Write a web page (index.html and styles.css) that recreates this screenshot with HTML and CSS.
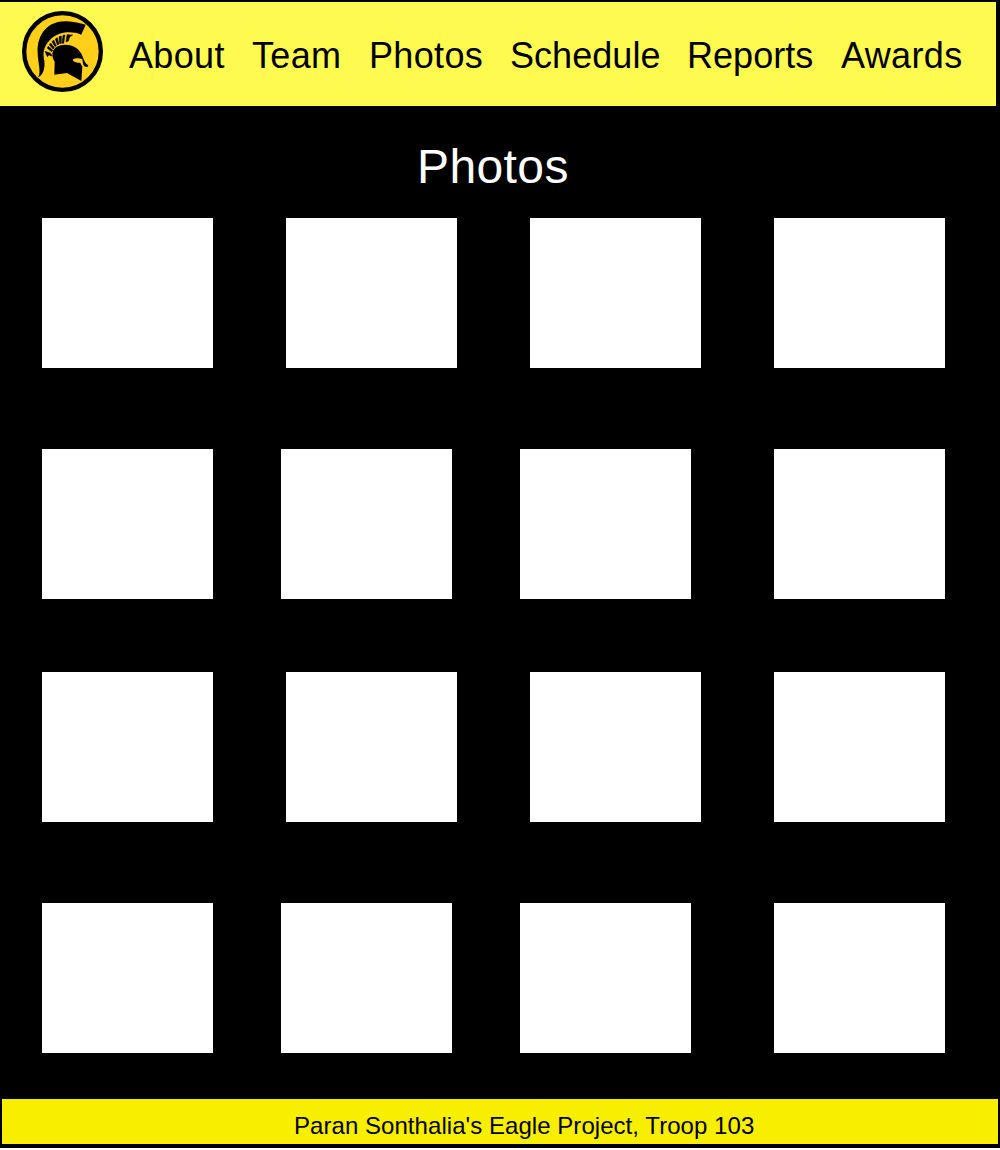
FILE: index.html
```html
<!DOCTYPE html>
<html lang="en">
<head>
<meta charset="utf-8">
<title>Photos</title>
<link rel="stylesheet" href="styles.css">
</head>
<body>
<div class="page">
  <header class="header">
    <svg class="logo" viewBox="29 33 243 243" aria-hidden="true">
      <circle cx="150.500" cy="154.500" r="115" fill="#ffcf1a" stroke="#000" stroke-width="13"/>
      <path d="M77 231C88 220 76 183 76 159C73 97 113 61 163 64C185 65 202 70 220 74L207 104C176 92 136 94 112 121C93 142 91 159 96 183C99 207 90 229 77 231Z"/>
      <path stroke="#000" stroke-width="1.500" d="M98 154L115 160L119 168L109 165L105 170ZM104 144L108 139L121 150L118 155ZM111 134L115 129L126 143L122 147ZM119 125L124 120L132 137L128 140ZM129 117L135 113L140 132L135 135ZM140 110L147 108L147 130L142 131ZM152 106L158 105L154 130L149 130ZM164 104L181 105L172 111L168 123L161 126Z"/>
      <path d="M126 224L127 185C117 170 117 151 132 141C157 127 192 135 205 158C215 173 214 188 228 196L225 202L216 199C212 195 211 186 210 178C202 174 189 174 181 179C184 187 194 187 204 189L210 200L207 243L164 219Z"/>
    </svg>
    <nav class="nav">
      <a>About</a>
      <a>Team</a>
      <a>Photos</a>
      <a class="tight">Schedule</a>
      <a class="tight">Reports</a>
      <a>Awards</a>
    </nav>
  </header>
  <main class="main">
    <h1 class="title">Photos</h1>
    <div class="gallery">
      <div class="row"><div class="photo"></div><div class="photo"></div><div class="photo"></div><div class="photo"></div></div>
      <div class="row narrow"><div class="photo"></div><div class="photo"></div><div class="photo"></div><div class="photo"></div></div>
      <div class="row"><div class="photo"></div><div class="photo"></div><div class="photo"></div><div class="photo"></div></div>
      <div class="row narrow"><div class="photo"></div><div class="photo"></div><div class="photo"></div><div class="photo"></div></div>
    </div>
  </main>
  <footer class="footer">Paran Sonthalia's Eagle Project, Troop 103</footer>
</div>
</body>
</html>
```
FILE: styles.css
```css
* { box-sizing: border-box; }
body {
  margin: 0;
  background: #fff;
  font-family: "Liberation Sans", Arial, sans-serif;
}
.page {
  display: flex;
  flex-direction: column;
  width: 1000px;
  height: 1148px;
  padding: 2px 0 4px;
  background: #000;
}
.header {
  display: flex;
  width: 996px;
  height: 104px;
  padding: 9px 0 0 22px;
  background: #fffa50;
}
.logo {
  flex: none;
  width: 81px;
  height: 81px;
}
.nav {
  display: grid;
  grid-template-columns: 123px 117px 141px 177px 154px 130px;
  margin: 25px 0 0 26px;
  color: #000;
  font-size: 36px;
  line-height: 40px;
  letter-spacing: 0.35px;
  white-space: nowrap;
}
.tight { letter-spacing: 0.05px; }
.title {
  height: 60px;
  margin: 31px 0 0 417px;
  color: #fff;
  font-size: 48px;
  font-weight: 400;
  line-height: 60px;
  letter-spacing: 0.4px;
}
.gallery {
  display: grid;
  grid-template-rows: 231px 223px 231px 150px;
  margin: 21px 0 0 42px;
}
.row {
  display: grid;
  grid-template-columns: 244px 244px 244px 171px;
}
.narrow { grid-template-columns: 239px 239px 254px 171px; }
.photo {
  width: 171px;
  height: 150px;
  background: #fff;
}
.footer {
  width: 996px;
  height: 45px;
  margin: auto 0 0 2px;
  padding-left: 292px;
  background: #f7ee00;
  color: #000;
  font-size: 24px;
  line-height: 53px;
  letter-spacing: 0.05px;
  white-space: nowrap;
}
```
